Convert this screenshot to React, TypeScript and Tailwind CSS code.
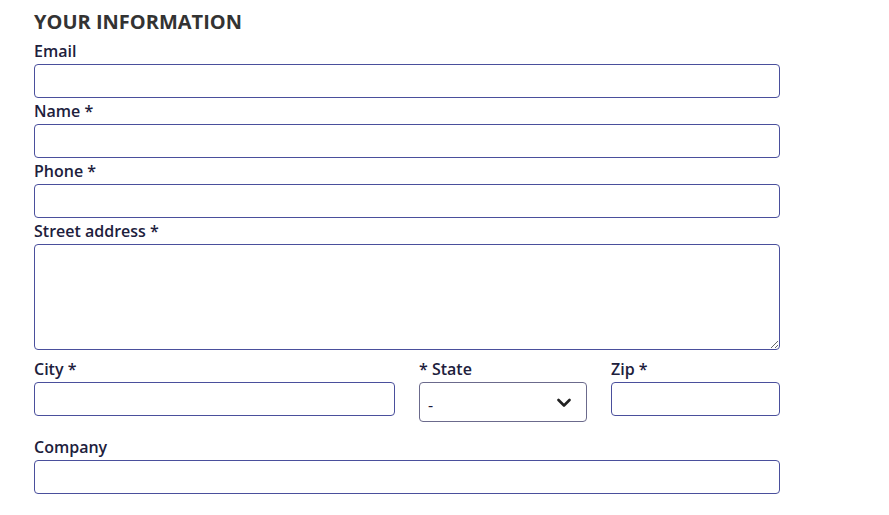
const inputCls =
  'block w-full h-[34px] rounded-[4px] border border-[#4a4f9c] bg-white px-2 text-base text-[#1c1c3c] outline-none';

function Label({ children }: { children: React.ReactNode }) {
  return (
    <label className="block h-[26px] leading-[26px] text-base font-semibold text-[#20203c]">
      {children}
    </label>
  );
}

export default function App() {
  return (
    <div className="min-h-screen bg-white" style={{ fontFamily: "'Open Sans', sans-serif" }}>
      <div className="w-[746px] ml-[34px] pt-[8px]">
        <h2 className="text-xl leading-7 font-bold text-[#333333] mb-[2px]">
          YOUR INFORMATION
        </h2>

        <Label>Email</Label>
        <input className={inputCls} />

        <Label>Name *</Label>
        <input className={inputCls} />

        <Label>Phone *</Label>
        <input className={inputCls} />

        <Label>Street address *</Label>
        <textarea className="block w-full h-[106px] rounded-[4px] border border-[#4a4f9c] bg-white px-2 text-base outline-none" />

        {/* City / State / Zip */}
        <div className="grid grid-cols-[361px_168px_169px] gap-x-6 mt-[6px] items-start">
          <div>
            <Label>City *</Label>
            <input className={inputCls} />
          </div>
          <div>
            <Label>* State</Label>
            <div className="relative h-10 rounded-[4px] border border-[#6b6a8c] bg-white flex items-center px-2">
              <span className="text-base text-[#1c1c3c] mt-[6px]">-</span>
              <svg
                className="absolute right-[15px] top-[15px]"
                width="14"
                height="10"
                viewBox="0 0 14 10"
                fill="none"
              >
                <polyline points="1.5,2 7,7.5 12.5,2" stroke="#222" strokeWidth="2.6" strokeLinecap="round" strokeLinejoin="round" />
              </svg>
            </div>
          </div>
          <div>
            <Label>Zip *</Label>
            <input className={inputCls} />
          </div>
        </div>

        <div className="mt-3">
          <Label>Company</Label>
          <input className={inputCls} />
        </div>
      </div>
    </div>
  );
}
